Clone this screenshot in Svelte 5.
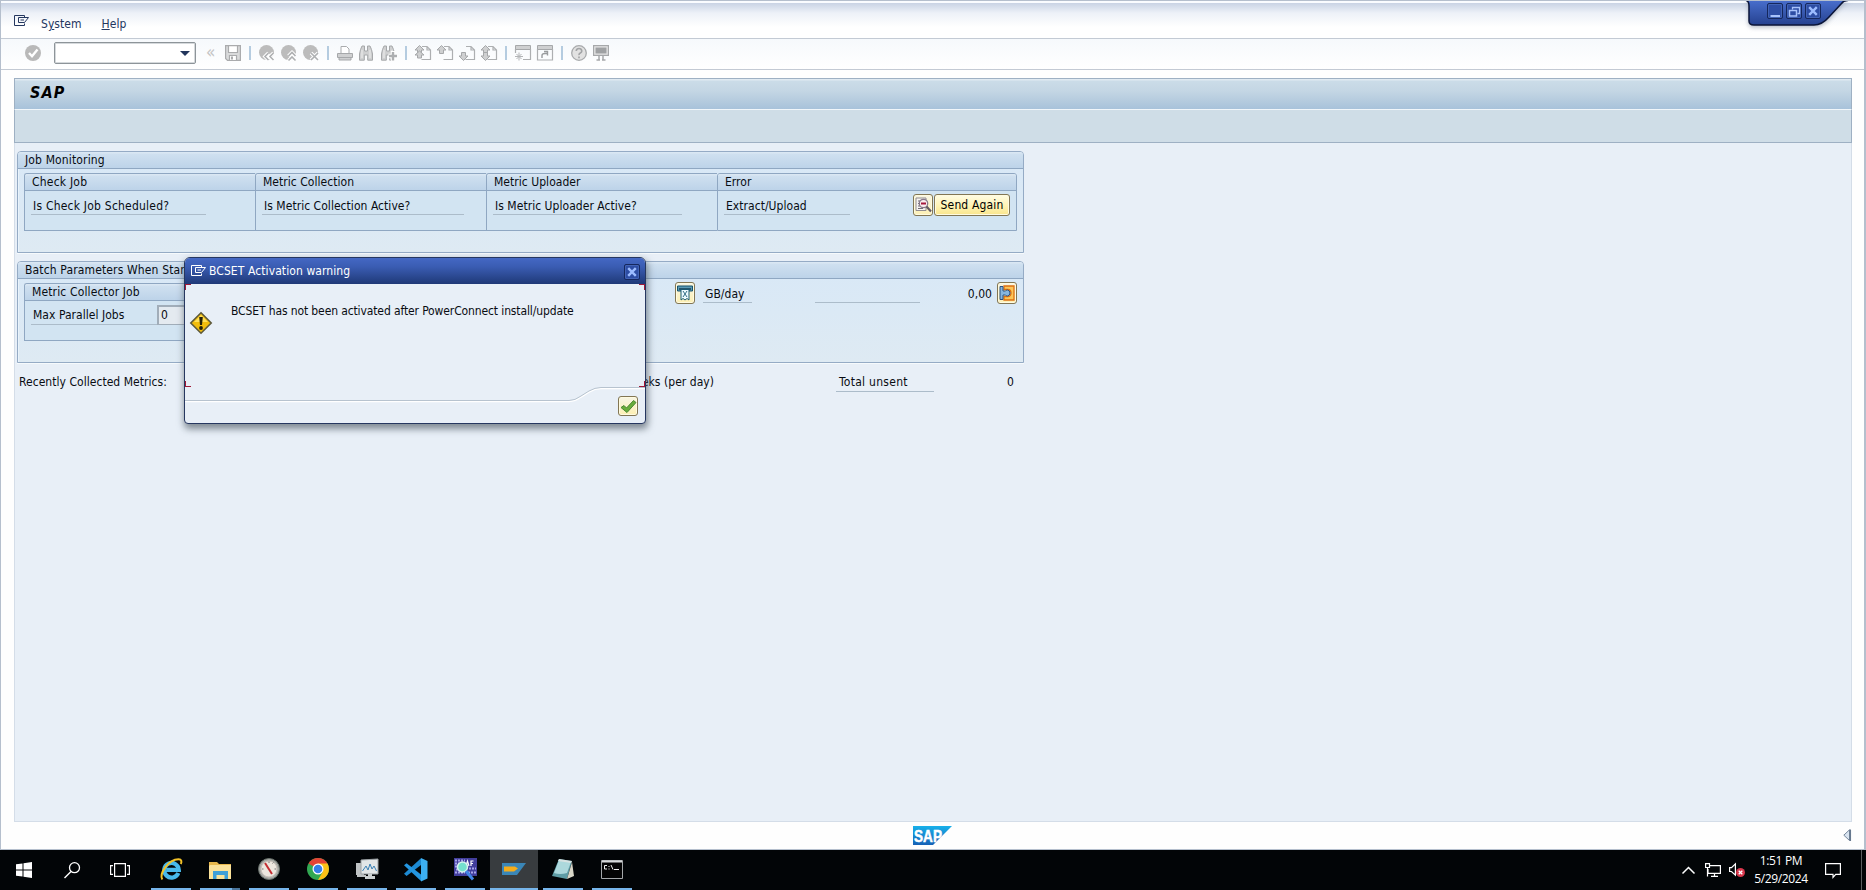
<script>
  const g = 'fill="none" stroke="#adafb1" stroke-width="1.2"';
  const page = `<path d="M7 1.500H12L15.500 5V14.500H6.500M12 1.500V5H15.500" ${g}/>`;
  const up = 'M4.500 .500L9 5H6.500V8.500H2.500V5H0Z';
  const down = 'M4.500 15.500L0 11H2.500V7.500H6.500V11H9Z';
  const f = 'fill="#cfd0d1" stroke="#a6a8aa"';
  const disc = '<circle cx="7.500" cy="7.500" r="7.500" fill="#bcbcbc"/>';
  const hook = (d) => `<path d="${d}" fill="none" stroke="#fff" stroke-width="3.600"/><path d="${d}" fill="none" stroke="#aeb0b2" stroke-width="1.600"/>`;
  const bino = `<path d="M1.500 4.500L3 1H5.500V6H8.500V1H11L12.500 4.500L13.500 9V15.200H8.700V10H5.300V15.200H.500V9Z" ${f}/><path d="M3 5V13M11 5V13" stroke="#eee"/>`;

  const icons = {
    ok: '<circle cx="8" cy="8" r="8" fill="#b9b9b9"/><path d="M4 8L7 11.200L12.500 4.500" fill="none" stroke="#fff" stroke-width="2.400"/>',
    save: `<path d="M.600.600H15.400V15.400H2.500L.600 13.500Z" fill="#d9dadb" stroke="#aaabad" stroke-width="1.200"/><path d="M3.500.600H12.500V7.500H3.500ZM4.500 15V10.500H11.500V15" fill="#fff" stroke="#aaabad" stroke-width="1.200"/><rect x="6" y="11.500" width="2" height="3" fill="#aaabad"/>`,
    back: disc + hook('M9.500 8L6 11.500L9.500 15M14.500 8L11 11.500L14.500 15'),
    exit: disc + hook('M7.500 11L11 7.500L14.500 11M7.500 15.500L11 12L14.500 15.500'),
    cancel: disc + hook('M8 8L15 15M15 8L8 15'),
    print: `<path d="M4 8V1.500H9.500L12 4V8" fill="#fff" stroke="#aaacae"/><path d="M.500 8.500H15.500V12.500H.500ZM2 12.500H14V15H2Z" ${f}/>`,
    find: bino,
    findnext: bino + '<path d="M12 6V16M7.500 11H16" stroke="#fff" stroke-width="4.500"/><path d="M12 7V15.500M8 11H16" stroke="#adafb1" stroke-width="2.400"/>',
    first: page + `<path d="${up}" ${f}/><path d="M4.500 6L9 10H6.500V13H2.500V10H0Z" ${f}/>`,
    prev: page + `<path d="${up}" ${f}/>`,
    next: page + `<path d="${down}" ${f}/>`,
    last: page + `<path d="${up}" ${f}/><path d="${down}" ${f}/>`,
    session: `<path d="M.500.500H15.500V4.500H.500Z" ${f}/><path d="M15.500 4V14.500H8M.500 4V8" ${g}/><path d="M4 7.500V15.500M0 11.500H8M1.500 9L6.500 14M6.500 9L1.500 14" stroke="#b3b5b7"/>`,
    shortcut: `<path d="M.500.500H15.500V4.500H.500Z" ${f}/><path d="M15.500 4V15H.500V4" ${g}/><path d="M5 13V10.500Q5 8.500 8 8.500H10M7 6.500L10.500 6.500V10.500" fill="none" stroke="#999b9d" stroke-width="1.400"/>`,
    help: '<circle cx="8" cy="8" r="7.300" fill="#e2e2e2" stroke="#a8aaac" stroke-width="1.300"/><path d="M5.200 6Q5.500 3.500 8 3.500T10.800 6Q10.800 7.200 9.300 8T8 10.200M8 11.500V13.200" fill="none" stroke="#a2a4a6" stroke-width="1.600"/>',
    layout: '<path d="M.600.600H15.400V10.400H.600Z" fill="#e6e6e6" stroke="#a6a8aa" stroke-width="1.200"/><rect x="2.500" y="2.500" width="11" height="6" fill="#9fa1a3"/><path d="M6 10.500V14.500M10 10.500V14.500M3.500 15H7M9 15H12.500" stroke="#a6a8aa" stroke-width="1.500"/>',
    menu: '<path d="M10.500 2.500V.500H.500V10.500H10.500V8.500M14.500 2.500H4.500V7.500H10.500L14.500 2.500M6.500 5H10" fill="none" stroke="currentColor"/>',
    detail: '<path d="M1 1H11V13.500H1Z" fill="#f7f4f1" stroke="#918c91"/><path d="M3 4H5M3 6.500H5M3 9H5M3 11.500H8" stroke="#716c75"/><circle cx="8.500" cy="6.500" r="4.200" fill="#fbeef0" stroke="#87798a" stroke-width="1.300"/><rect x="6" y="5.500" width="5" height="2" fill="#a5183c"/><path d="M11.500 9.500L16 14.500" stroke="#645b63" stroke-width="2.200"/>',
    extract: '<path d="M.500 1H15.500V6H.500Z" fill="#5b9bb5" stroke="#17536c"/><path d="M2 4H14" stroke="#133f56" stroke-width="1.500"/><path d="M4 4.500V15L6 13.500L8 15L10 13.500L12 15V4.500Z" fill="#eefaff" stroke="#1b5a73"/><path d="M6 6L10 12M10 6L6 12" stroke="#356f87"/>',
    connect: '<path d="M5 1H15V15H5V11.500H8.500Q12 11.500 12 8T8.500 4.500H5Z" fill="#fbc65a" stroke="#dd6f10" stroke-width="1.300"/><path d="M1 1.500H4V6H6.500Q7 5 8.500 5Q11 5.500 11 8T8.500 11Q7 11 6.500 10H4V14.500H1Z" fill="#86b6e0" stroke="#2b5381"/>',
    check: '<path d="M1 8.500L4 6.500L6.500 9L13.500 1.500L16 3.500L7 13.500Z" fill="#68ad3b" stroke="#4a8733"/>',
    warn: '<path d="M11 .800L21.200 11L11 21.200L.800 11Z" fill="#f2bd0c" stroke="#5e5a3a" stroke-width="1.600"/><path d="M11 3L18 10H4Z" fill="#ffe058"/><path d="M9.200 5H12.800L12 13H10Z" fill="#24200a"/><circle cx="11" cy="16" r="1.900" fill="#24200a"/>',
    min: '<path d="M2.500 12H12" stroke="#a8c2fb" stroke-width="2"/>',
    restore: '<path d="M5.500 5.500V3.500H12.500V9.500H10.500" fill="none" stroke="#a8c2fb" stroke-width="1.300"/><path d="M2.500 6.500H9.500V12H2.500Z" fill="none" stroke="#a8c2fb" stroke-width="1.500"/>',
    close: '<path d="M3.200 3.200L10.800 10.800M10.800 3.200L3.200 10.800" stroke="#9cbcff" stroke-width="2.400"/>',
    sap: '<defs><linearGradient id="sg" x1="0" y1="0" x2="0" y2="1"><stop offset="0" stop-color="#17b0ea"/><stop offset="1" stop-color="#1661b6"/></linearGradient></defs><path d="M0 0H39L20 19H0Z" fill="url(#sg)"/><text x="1" y="15.500" textLength="28" lengthAdjust="spacingAndGlyphs" font-family="Liberation Sans" font-weight="700" font-size="16.500" fill="#fff" stroke="#fff" stroke-width=".5">SAP</text>',
    grip: '<path d="M6.500.800V11.500L.800 6.200Z" fill="#d9e4f0" stroke="#75869b"/><path d="M7.300.500V12" stroke="#66788e" stroke-width="1.500"/>',
    win: '<path d="M0 2.300L6.500 1.400V7.500H0ZM7.500 1.200L16 0V7.500H7.500ZM0 8.500H6.500V14.600L0 13.700ZM7.500 8.500H16V16L7.500 14.800Z" fill="#fff"/>',
    search: '<circle cx="10.500" cy="5.700" r="5" fill="none" stroke="#fff" stroke-width="1.300"/><path d="M7 9.500L.500 16" stroke="#fff" stroke-width="1.400"/>',
    tasks: '<path d="M4.600.600H15.400V13.400H4.600ZM3 2.600H.600V11.400H3M17 2.600H19.400V11.400H17" fill="none" stroke="#fff" stroke-width="1.200"/>',
    ie: '<path d="M18.300 15A7.300 7.300 0 1 1 18.800 11.800H6.500" fill="none" stroke="#48b9ea" stroke-width="4.200"/><path d="M2.300 21.500C-1 16 8 1.500 18.500 1.200C21.500 1.100 22 3.500 20.800 6" fill="none" stroke="#f2c229" stroke-width="2"/>',
    folder: '<path d="M0 3H8L10 5H22V20H0Z" fill="#e8b84c"/><path d="M1 6H22V20H0V7Z" fill="#fbe29a"/><path d="M4 12H19V20H15.500V16H7.500V20H4Z" fill="#3f9fd8"/>',
    gauge: '<circle cx="11" cy="11" r="10.500" fill="#a8aaa6" stroke="#67706a"/><circle cx="11" cy="11" r="8" fill="#ece7df" stroke="#c7c0b8"/><path d="M7 5L14 16" stroke="#c32c31" stroke-width="2"/><path d="M11 3.500V5M4 11H5.500M16.500 11H18M14.500 5.500L15.500 4.500" stroke="#777"/>',
    chrome: '<circle cx="11" cy="11" r="11" fill="#31a852"/><path d="M11 11L1.500 5.500A11 11 0 0 1 20.500 5.500Z" fill="#e44335"/><path d="M20.500 5.500H11L15.800 13.800L11 22A11 11 0 0 0 20.500 5.500Z" fill="#fbc116"/><circle cx="11" cy="11" r="5.500" fill="#fff"/><circle cx="11" cy="11" r="4.300" fill="#347fe8"/>',
    perf: '<path d="M0 5H8V17H0ZM1 17H10V19H1Z" fill="#bfc3c4"/><path d="M5 2L22 1V16H5Z" fill="#e2e6e7" stroke="#9ba1a4"/><path d="M6.500 13L10 8L12 12L14 6L16 11L18 8L20.500 13" fill="none" stroke="#3b81b5"/><path d="M12 16H16V18H19V21H9V18H12Z" fill="#cbd0d1"/>',
    code: '<path d="M0 15.800L17 .300V7L2.600 18Z" fill="#1d8ad2"/><path d="M0 7.300L2.600 5.200L17 16.500V23Z" fill="#2496e0"/><path d="M17 0L23.500 3V20.500L17 23.500Z" fill="#3cb0f2"/>',
    trace: '<path d="M0 0H23V18H0Z" fill="#423e9c"/><path d="M1 2.500H11M1 5.500H5M1 8.500H4M2 11.500H4M1 14.500H11M14 14.500H22M15 10.500H22" stroke="#a7a4ea" stroke-width="2" stroke-dasharray="2 1"/><path d="M12 8L13.500 3L15 8M17 8V3H19.500M17 5.500H19" fill="none" stroke="#fff" stroke-width="1.200"/><circle cx="8.500" cy="9" r="5" fill="#75e0ce" stroke="#d5f5ee" stroke-width="1.500"/><path d="M12 13L19 21.500" stroke="#4186e8" stroke-width="3"/>',
    logon: '<path d="M0 0H24L15 12H0Z" fill="#3a86b7"/><path d="M2 3.500H13L16 5.500L12 8.500H2Z" fill="#f4ac1b"/>',
    note: '<path d="M7 1L20 3L15 21L0 18Z" fill="#5f9da6"/><path d="M7 2L19 4L15 15Q8 17 2 15Z" fill="#acd8dc"/><path d="M7 1L20 3L19 5L6 3Z" fill="#d7e2e2"/><path d="M20 4L22 18L15 21Z" fill="#d8d6c7"/>',
    cmd: '<path d="M.500.500H21.500V18.500H.500Z" fill="#040404" stroke="#a4a7a9"/><path d="M1 1.500H21" stroke="#d6d9da" stroke-width="2"/><path d="M6 5.500H3.500V9H6M8 6V7M8 8.500V9.500M10 5L12 9.500M13 9.500H18" fill="none" stroke="#eee"/>',
    chev: '<path d="M.500 7.500L6.500 1.500L12.500 7.500" fill="none" stroke="#fff" stroke-width="1.500"/>',
    net: '<path d="M4.500 2.600H15.400V10.400H3V6M.600.600H4.500V4.500H.600ZM2.500 5V13.500M6 13.400H13M9.500 10.500V13" fill="none" stroke="#fff" stroke-width="1.200"/>',
    sound: '<path d="M.600 4.600H2.500L6.400.900V12.100L2.500 8.500H.600Z" fill="none" stroke="#fff" stroke-width="1.200"/><circle cx="11.500" cy="9.500" r="4.500" fill="#d9374c"/><path d="M9.700 7.700L13.300 11.300M13.300 7.700L9.700 11.300" stroke="#fff" stroke-width="1.300"/>',
    notice: '<path d="M.600.600H15.400V11.400H10.700L8 14.500V11.400H.600Z" fill="none" stroke="#fff" stroke-width="1.200"/>'
  };

  const tools = ['save', '|', 'back', 'exit', 'cancel', '|', 'print', 'find', 'findnext', '|', 'first', 'prev', 'next', 'last', '|', 'session', 'shortcut', '|', 'help', 'layout'];
  const jobs = [
    { title: 'Check Job', label: 'Is Check Job Scheduled?', w: 175, wide: true },
    { title: 'Metric Collection', label: 'Is Metric Collection Active?', w: 202 },
    { title: 'Metric Uploader', label: 'Is Metric Uploader Active?', w: 189 },
    { title: 'Error', label: 'Extract/Upload', w: 126, actions: true }
  ];
  const apps = [['ie', 23, 23], ['folder', 22, 21], ['gauge', 22, 22], ['chrome', 23, 23], ['perf', 22, 22], ['code', 24, 23], ['trace', 23, 22], ['logon', 24, 12], ['note', 22, 22], ['cmd', 22, 19]];
</script>

{#snippet icon(name, w = 16, h = 16)}
  <svg width={w} height={h} overflow="visible">{@html icons[name]}</svg>
{/snippet}

<div class="screen">
  <main class="window">
    <nav class="menubar">
      <span class="menuicon">{@render icon('menu', 15, 12)}</span>
      <span class="m1">S<u>y</u>stem</span>
      <span><u>H</u>elp</span>
    </nav>
    <div class="toolbar">
      {@render icon('ok')}
      <div class="command"><i></i></div>
      <span class="collapse">«</span>
      {#each tools as t}
        {#if t === '|'}<b class="sep"></b>{:else}{@render icon(t)}{/if}
      {/each}
    </div>
    <section class="panel">
      <header><h1>SAP</h1></header>
      <div class="appbar"></div>
      <div class="content">
        <div class="group">
          <h2>Job Monitoring</h2>
          <div class="jobs">
            {#each jobs as job}
              <div class="box" class:wide={job.wide}>
                <h3>{job.title}</h3>
                <div class="jobrow">
                  <span class="field" style="width:{job.w}px">{job.label}</span>
                  {#if job.actions}
                    <button class="iconbtn detail" aria-label="Details">{@render icon('detail')}</button>
                    <button class="send">Send Again</button>
                  {/if}
                </div>
              </div>
            {/each}
          </div>
        </div>
        <div class="group">
          <h2>Batch Parameters When Started</h2>
          <div class="batch">
            <div class="box collector">
              <h3>Metric Collector Job</h3>
              <div class="jobrow"><span class="field parallel">Max Parallel Jobs</span><span class="entry">0</span></div>
            </div>
            <button class="iconbtn extract" aria-label="Extract">{@render icon('extract')}</button>
            <span class="field gb">GB/day</span>
            <span class="field blank"></span>
            <span class="amount">0,00</span>
            <button class="iconbtn connect" aria-label="Connect">{@render icon('connect')}</button>
          </div>
        </div>
        <div class="summary">
          <span class="recent">Recently Collected Metrics:</span>
          <span class="weeks">Last 4 weeks (per day)</span>
          <span class="field total">Total unsent</span>
          <span class="count">0</span>
        </div>
      </div>
    </section>
    <footer>
      <span class="logo">{@render icon('sap', 39, 19)}</span>
      <span class="grip">{@render icon('grip', 8, 12)}</span>
    </footer>

    <div class="controls">
      <svg width="102" height="32"><defs><linearGradient id="cg" x1="0" y1="0" x2="0" y2="1"><stop offset="0" stop-color="#496fce"/><stop offset="1" stop-color="#25418f"/></linearGradient></defs><path d="M0 0Q3 1 3 6V21Q3 25 8 25H68Q76 25 83 17L95 4Q98 0 102 0Z" fill="url(#cg)"/><path d="M0 .5Q3 1 3 6V21Q3 25 8 25H68Q76 25 83 17L95 4Q98 0 102 .5" fill="none" stroke="#0b1539" stroke-width="1.500"/></svg>
      <div>
        {#each ['min', 'restore', 'close'] as c}<span class="ctl">{@render icon(c, 14, 14)}</span>{/each}
      </div>
    </div>

    <div class="dialog">
      <div class="dtitle">
        {@render icon('menu', 15, 12)}
        <span>BCSET Activation warning</span>
        <b class="ctl">{@render icon('close', 14, 14)}</b>
      </div>
      <div class="dbody">
        <span class="warn">{@render icon('warn', 22, 22)}</span>
        <p>BCSET has not been activated after PowerConnect install/update</p>
        <i class="c tl"></i><i class="c tr"></i><i class="c bl"></i><i class="c br"></i>
      </div>
      <div class="dfoot">
        <svg width="460" height="36"><path d="M0 14.500H384Q390 14.500 396 10L404 5Q410 1.500 416 1.500H460" fill="none" stroke="#fff" stroke-width="1.500"/><path d="M0 13.500H384Q390 13.500 396 9L404 4Q410 .5 416 .5H460" fill="none" stroke="#b7c3cf"/></svg>
        <button class="iconbtn confirm" aria-label="Continue">{@render icon('check', 17, 15)}</button>
      </div>
    </div>
  </main>

  <div class="taskbar">
    <span class="sys">{@render icon('win')}</span>
    <span class="sys">{@render icon('search', 16, 17)}</span>
    <span class="sys">{@render icon('tasks', 20, 14)}</span>
    <div class="apps">
      {#each apps as [name, w, h]}
        <span class="app" class:active={name === 'logon'} class:many={name === 'folder'}>{@render icon(name, w, h)}</span>
      {/each}
    </div>
    <div class="tray">
      {@render icon('chev', 13, 9)}
      <span class="net">{@render icon('net', 16, 14)}</span>
      <span class="sound">{@render icon('sound', 16, 14)}</span>
      <div class="clock"><span>1:51 PM</span><span class="date">5/29/2024</span></div>
      <span class="notice">{@render icon('notice', 16, 15)}</span>
    </div>
    <b class="peek"></b>
  </div>
</div>

<style>
  :global(body) { margin: 0; overflow: hidden; }
  * { box-sizing: border-box; }
  .screen { width: 1866px; height: 890px; background: #000; font: 12px/16px "DejaVu Sans Condensed", "DejaVu Sans", sans-serif; font-stretch: condensed; color: #080c12; letter-spacing: .04px; white-space: nowrap; }
  svg { display: block; flex: none; }
  h1, h2, h3, p { margin: 0; font-weight: 400; font-size: inherit; }
  .window { position: relative; height: 850px; display: flex; flex-direction: column; background: #fefefe; border: solid #b5bfcd; border-width: 1px 2px 1px 1px; overflow: hidden; }
  .menubar { height: 38px; flex: none; display: flex; align-items: flex-start; padding: 13px 0 0 13px; border-top: 2px solid #fafcff; border-bottom: 1px solid #c3cad4; background: linear-gradient(#c9d3e4, #edf1f8 10px, #fff 24px); color: #24375f; }
  .menuicon { margin-right: 12px; margin-top: -1px; }
  .m1 { margin-right: 20px; }
  .menubar span:not(.menuicon) { line-height: 16px; }
  .toolbar { height: 31px; flex: none; display: flex; align-items: center; gap: 6px; padding: 0 0 2px 24px; border-bottom: 1px solid #c3cad4; background: linear-gradient(#f6f9fc, #fff); }
  .command { width: 142px; height: 22px; margin-left: 7px; border: 1px solid #8d9499; border-radius: 2px; background: #fff; box-shadow: inset 0 0 0 1px #d5d9dc; display: flex; align-items: center; justify-content: flex-end; padding-right: 5px; }
  .command i { border: 5px solid transparent; border-top-color: #22355c; border-bottom: 0; }
  .collapse { width: 13px; margin: 0 0 2px 4px; font-size: 17px; color: #c4c4c4; }
  .sep { width: 6px; height: 14px; background: linear-gradient(90deg, transparent 2px, #b5cce0 2px, #b5cce0 4px, transparent 4px); }
  .panel { margin: 8px 12px 0 13px; flex: 1; display: flex; flex-direction: column; }
  header { height: 32px; padding: 5px 15px; border: 1px solid #9eb0c3; border-bottom: 1px solid #f1f6fa; background: linear-gradient(#e0eaf2 1px, #cbdce8 2px, #c4d6e4 12px, #a8c2da); }
  h1 { font: italic 700 16px/18px "DejaVu Sans Condensed", "DejaVu Sans", sans-serif; font-stretch: condensed; letter-spacing: 1.1px; color: #000; }
  .appbar { height: 33px; background: #cfdde7; border: 1px solid #9eb0c3; border-top: 0; }
  .content { flex: 1; padding: 8px 0 0 2px; border: 1px solid #d4dde8; border-top: 0; background: #e8eff7; }
  .group { width: 1007px; height: 102px; margin-bottom: 8px; border: 1px solid #95abc5; border-radius: 4px 4px 0 0; background: linear-gradient(#d8e8f7, #deeaf3); box-shadow: inset 1px 0 #e9f3fb, 0 1px #f6fafc; overflow: hidden; }
  h2, h3 { height: 17px; line-height: 16px; padding-left: 7px; border-bottom: 1px solid #8fa7c2; background: linear-gradient(#dae7f3 1px, #cfe0f0 2px, #bdd3e9); }
  h2 { letter-spacing: .14px; }
  .jobs { margin: 4px 6px; display: grid; grid-template-columns: 231px 231px 231px 300px; }
  .box { height: 58px; border: 1px solid #8fa7c2; border-right: 0; border-radius: 3px 0 0 0; background: #d2e4f2; overflow: hidden; }
  .box:last-child { border-right: 1px solid #8fa7c2; border-radius: 3px 3px 0 0; }
  .box.wide { letter-spacing: .22px; }
  .jobrow { display: flex; padding: 4px 0 0 6px; }
  .field { height: 20px; line-height: 22px; padding-left: 2px; border-bottom: 1px solid #acbcca; }
  button { font: inherit; letter-spacing: .15px; color: #000; padding: 0; border: 1px solid #827654; border-radius: 3px; background: linear-gradient(#fffce4, #fff3b3 55%, #f9e58c); box-shadow: inset 0 0 0 1px #fffbe0; }
  .iconbtn { width: 20px; height: 22px; flex: none; display: flex; align-items: center; justify-content: center; background: linear-gradient(#f7f5e4, #fdf0b4); }
  .detail { margin: -1px 1px 0 63px; }
  .send { width: 76px; height: 22px; margin-top: -1px; }
  .batch { display: flex; align-items: flex-start; padding: 4px 6px; }
  .collector { width: 300px; }
  .collector h3 { letter-spacing: .14px; }
  .parallel { width: 126px; line-height: 21px; }
  .entry { width: 60px; height: 20px; border: solid #a1adb9; border-width: 2px 1px 1px 2px; background: #e4eaf0; padding-left: 2px; line-height: 17px; }
  .extract { margin: -1px 8px 0 351px; }
  .gb { width: 49px; }
  .blank { width: 105px; margin: 0 0 0 63px; }
  .amount { width: 72px; margin: 3px 5px 0 0; text-align: right; }
  .connect { margin-top: -1px; }
  .summary { display: flex; padding: 3px 0 0 2px; }
  .recent { width: 552px; }
  .weeks { width: 143px; text-align: right; margin-right: 122px; }
  .total { width: 98px; height: 20px; margin-top: -2px; line-height: 20px; padding-left: 3px; letter-spacing: .28px; }
  .count { width: 80px; text-align: right; }
  footer { height: 27px; flex: none; display: flex; align-items: center; padding: 0 13px 1px 912px; }
  .grip { margin-left: auto; }
  .controls { position: absolute; left: 1745px; top: -1px; filter: drop-shadow(0 2px 2px #8b94a799); }
  .controls div { position: absolute; left: 21px; top: 3px; display: flex; gap: 3px; }
  .ctl { width: 16px; height: 16px; display: flex; justify-content: center; border: 1px solid #15275d; border-radius: 2px; background: #2d4da4; box-shadow: inset 0 0 0 1px #4263b5; }
  .dialog { position: absolute; left: 183px; top: 256px; width: 462px; height: 167px; border: 1px solid #263760; border-radius: 6px 6px 4px 4px; background: #e8eff7; box-shadow: 1px 4px 7px 1px #4c5863aa; display: flex; flex-direction: column; }
  .dtitle { height: 26px; flex: none; display: flex; align-items: center; padding: 0 5px 0 6px; border-radius: 5px 5px 0 0; background: linear-gradient(#4468c4, #3a5cb2 9px, #1f3977); color: #fff; letter-spacing: .09px; }
  .dtitle .ctl { margin-top: 2px; }
  .dtitle span { margin: 0 auto 0 3px; }
  .dbody { position: relative; height: 103px; display: flex; padding-left: 5px; letter-spacing: -.12px; }
  .warn { margin-top: 28px; }
  .dbody p { margin: 19px 0 0 19px; }
  .c { position: absolute; width: 6px; height: 6px; border: 0 solid #a01836; }
  .tl { left: 0; top: 0; border-width: 1px 0 0 1px; }
  .tr { right: 0; top: 0; border-width: 1px 1px 0 0; }
  .bl { left: 0; bottom: 0; border-width: 0 0 1px 1px; }
  .br { right: 0; bottom: 0; border-width: 0 1px 1px 0; }
  .dfoot { flex: 1; display: flex; }
  .dfoot > svg { margin-top: 0; }
  .confirm { margin: 9px 0 0 -27px; height: 20px; z-index: 1; }
  .taskbar { height: 40px; display: flex; background: #020507; color: #fff; }
  .sys { width: 48px; display: flex; align-items: center; justify-content: center; }
  .apps { display: flex; gap: 9px; margin-left: 7px; }
  .app { width: 40px; height: 40px; display: flex; align-items: center; justify-content: center; border-bottom: 2px solid #76b5ea; }
  .many { border-image: linear-gradient(90deg, #76b5ea 31px, #4a759b 31px) 2; border-width: 0 0 2px; border-style: solid; }
  .active { width: 48px; margin: 0 -4px; background: #383c3f; }
  .tray { display: flex; margin-left: auto; align-items: center; font: 12px/18px "Open Sans", "Noto Sans", sans-serif; }
  .net { margin-left: 10px; }
  .sound { margin-left: 8px; }
  .clock { width: 60px; margin: 0 14px 0 6px; display: flex; flex-direction: column; align-items: center; letter-spacing: -.35px; }
  .peek { width: 5px; margin-left: 20px; border-left: 1px solid #5b5e60; }
</style>
